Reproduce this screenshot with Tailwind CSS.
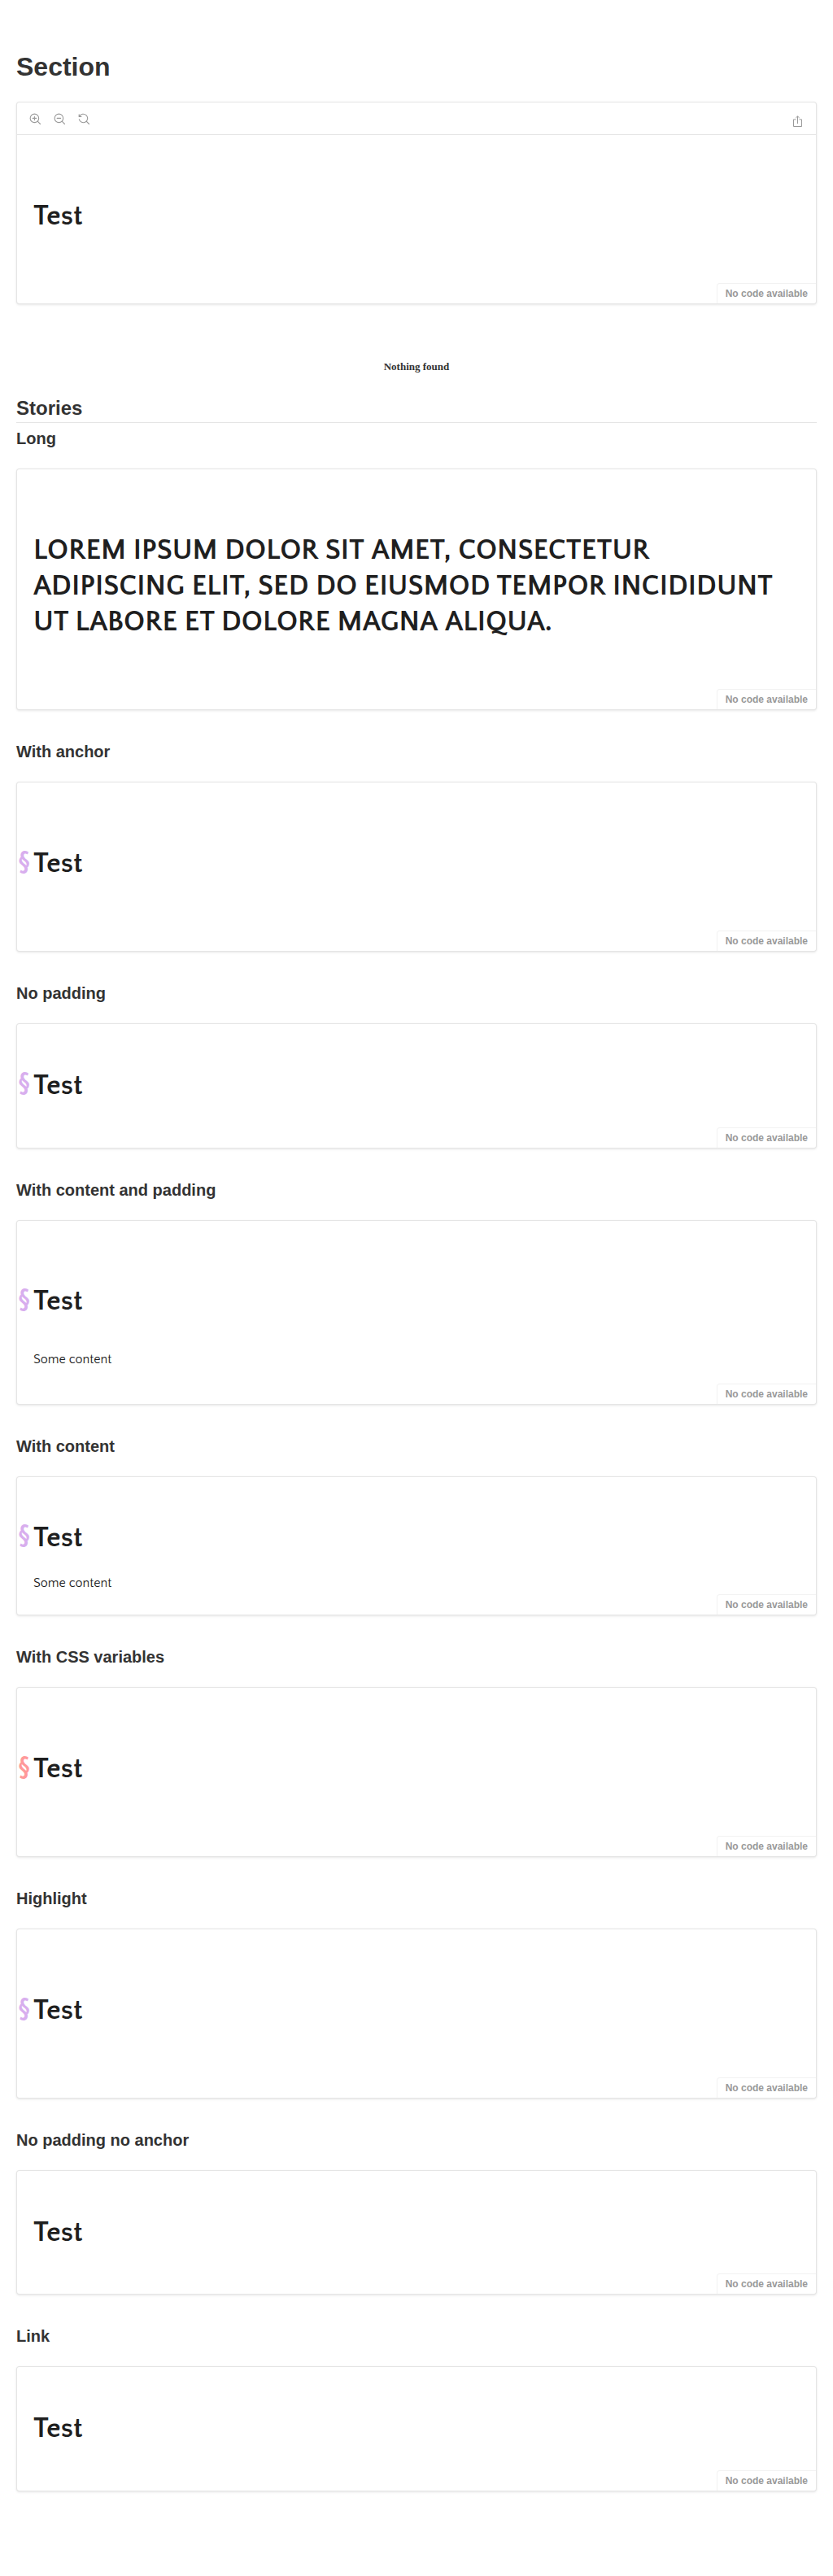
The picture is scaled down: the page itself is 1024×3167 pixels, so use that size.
<!DOCTYPE html>
<html lang="en">
<head>
<meta charset="utf-8">
<title>Section</title>
<script src="https://cdn.jsdelivr.net/npm/@tailwindcss/browser@4"></script>
</head>
<body class="bg-white">
<main class="h-[3167px] px-5 pt-[66px] font-['Liberation_Sans',Arial,sans-serif] text-[#333]">
  <h1 class="text-[32px] leading-8 font-bold">Section</h1>

  <section class="relative mt-[27px] h-[249px] rounded border border-black/10 bg-white shadow-[0_1px_3px_0_rgba(0,0,0,0.1)]">
    <div class="flex h-10 items-center justify-between border-b border-black/10 pl-[15px] pr-4 text-[#999]">
      <div class="mt-px flex gap-4">
        <svg class="size-3.5" viewBox="0 0 14 14" fill="none" stroke="currentColor" stroke-width="1.1" stroke-linecap="round"><circle cx="6.400" cy="6.400" r="5.250"/><path d="M10.200 10.200l3.300 3.300M4.200 6.400h4.400M6.400 4.200v4.400"/></svg>
        <svg class="size-3.5" viewBox="0 0 14 14" fill="none" stroke="currentColor" stroke-width="1.1" stroke-linecap="round"><circle cx="6.400" cy="6.400" r="5.250"/><path d="M10.200 10.200l3.300 3.300M4.200 6.400h4.400"/></svg>
        <svg class="size-3.5" viewBox="0 0 14 14" fill="none" stroke="currentColor" stroke-width="1.1" stroke-linecap="round"><path d="M1.700 4.100A5.250 5.250 0 1 1 1.300 7.700M10.200 10.200l3.300 3.300M1.200 1.700v2.700h2.700"/></svg>
      </div>
      <svg class="mt-[7px] h-3.5 w-[13px]" viewBox="0 0 13 14" fill="none" stroke="currentColor"><path d="M4.500 4.900h-3v8.600h10V4.900h-3M6.500 10V1"/><path d="M4.300 3L6.500.900 8.700 3"/></svg>
    </div>
    <h2 class="px-5 pt-[78px] font-['Quattrocento_Sans',Lato,sans-serif] text-[35.2px] leading-[44px] font-bold text-[#1f1f1f]">Test</h2>
    <div class="absolute right-0 bottom-0 rounded-tl rounded-br border-t border-l border-black/5 bg-white px-2.5 py-1 text-xs leading-4 font-bold text-[#999]">No code available</div>
  </section>

  <div class="mt-[67px] text-center font-['Liberation_Serif',serif] text-[13px] leading-5 font-bold">Nothing found</div>
  <h2 class="mt-[29px] border-b border-black/10 pb-[5px] text-2xl leading-6 font-bold">Stories</h2>

  <h3 class="mt-[9px] text-xl leading-5 font-bold">Long</h3>
  <section class="relative mt-[27px] h-[297px] rounded border border-black/10 bg-white shadow-[0_1px_3px_0_rgba(0,0,0,0.1)]">
    <h2 class="px-5 pt-[78px] font-['Quattrocento_Sans',Lato,sans-serif] text-[35.2px] leading-[44px] font-bold text-[#1f1f1f]">LOREM IPSUM DOLOR SIT <span class="ml-px">AMET,</span> CONSECTETUR ADIPISCING ELIT, SED DO EIUSMOD TEMPOR INCIDIDUNT UT LABORE ET DOLORE MAGNA <span class="ml-[1.5px]">ALIQUA.</span></h2>
    <div class="absolute right-0 bottom-0 rounded-tl rounded-br border-t border-l border-black/5 bg-white px-2.5 py-1 text-xs leading-4 font-bold text-[#999]">No code available</div>
  </section>

  <h3 class="mt-[41px] text-xl leading-5 font-bold">With anchor</h3>
  <section class="relative mt-[27px] h-[209px] rounded border border-black/10 bg-white shadow-[0_1px_3px_0_rgba(0,0,0,0.1)]">
    <h2 class="px-5 pt-[78px] font-['Quattrocento_Sans',Lato,sans-serif] text-[35.2px] leading-[44px] font-bold text-[#1f1f1f]"><span class="relative block"><a class="absolute -left-[19px] -top-px text-[#d8aeee]">§</a>Test</span></h2>
    <div class="absolute right-0 bottom-0 rounded-tl rounded-br border-t border-l border-black/5 bg-white px-2.5 py-1 text-xs leading-4 font-bold text-[#999]">No code available</div>
  </section>

  <h3 class="mt-[41px] text-xl leading-5 font-bold">No padding</h3>
  <section class="relative mt-[27px] h-[154px] rounded border border-black/10 bg-white shadow-[0_1px_3px_0_rgba(0,0,0,0.1)]">
    <h2 class="px-5 pt-[54px] font-['Quattrocento_Sans',Lato,sans-serif] text-[35.2px] leading-[44px] font-bold text-[#1f1f1f]"><span class="relative block"><a class="absolute -left-[19px] -top-0.5 text-[#d8aeee]">§</a>Test</span></h2>
    <div class="absolute right-0 bottom-0 rounded-tl rounded-br border-t border-l border-black/5 bg-white px-2.5 py-1 text-xs leading-4 font-bold text-[#999]">No code available</div>
  </section>

  <h3 class="mt-[41px] text-xl leading-5 font-bold">With content and padding</h3>
  <section class="relative mt-[27px] h-[227px] rounded border border-black/10 bg-white shadow-[0_1px_3px_0_rgba(0,0,0,0.1)]">
    <h2 class="px-5 pt-[77px] font-['Quattrocento_Sans',Lato,sans-serif] text-[35.2px] leading-[44px] font-bold text-[#1f1f1f]"><span class="relative block"><a class="absolute -left-[19px] -top-px text-[#d8aeee]">§</a>Test</span></h2>
    <p class="mt-[37px] px-5 font-['Quattrocento_Sans',Lato,sans-serif] text-base leading-6 text-[#1f1f1f]">Some content</p>
    <div class="absolute right-0 bottom-0 rounded-tl rounded-br border-t border-l border-black/5 bg-white px-2.5 py-1 text-xs leading-4 font-bold text-[#999]">No code available</div>
  </section>

  <h3 class="mt-[41px] text-xl leading-5 font-bold">With content</h3>
  <section class="relative mt-[27px] h-[171px] rounded border border-black/10 bg-white shadow-[0_1px_3px_0_rgba(0,0,0,0.1)]">
    <h2 class="px-5 pt-[53px] font-['Quattrocento_Sans',Lato,sans-serif] text-[35.2px] leading-[44px] font-bold text-[#1f1f1f]"><span class="relative block"><a class="absolute -left-[19px] -top-0.5 text-[#d8aeee]">§</a>Test</span></h2>
    <p class="mt-[21px] px-5 font-['Quattrocento_Sans',Lato,sans-serif] text-base leading-6 text-[#1f1f1f]">Some content</p>
    <div class="absolute right-0 bottom-0 rounded-tl rounded-br border-t border-l border-black/5 bg-white px-2.5 py-1 text-xs leading-4 font-bold text-[#999]">No code available</div>
  </section>

  <h3 class="mt-[41px] text-xl leading-5 font-bold">With CSS variables</h3>
  <section class="relative mt-[27px] h-[209px] rounded border border-black/10 bg-white shadow-[0_1px_3px_0_rgba(0,0,0,0.1)]">
    <h2 class="px-5 pt-[78px] font-['Quattrocento_Sans',Lato,sans-serif] text-[35.2px] leading-[44px] font-bold text-[#1f1f1f]"><span class="relative block"><a class="absolute -left-[19px] -top-px text-[#ff9999]">§</a>Test</span></h2>
    <div class="absolute right-0 bottom-0 rounded-tl rounded-br border-t border-l border-black/5 bg-white px-2.5 py-1 text-xs leading-4 font-bold text-[#999]">No code available</div>
  </section>

  <h3 class="mt-[41px] text-xl leading-5 font-bold">Highlight</h3>
  <section class="relative mt-[27px] h-[209px] rounded border border-black/10 bg-white shadow-[0_1px_3px_0_rgba(0,0,0,0.1)]">
    <h2 class="px-5 pt-[78px] font-['Quattrocento_Sans',Lato,sans-serif] text-[35.2px] leading-[44px] font-bold text-[#1f1f1f]"><span class="relative block"><a class="absolute -left-[19px] -top-px text-[#d8aeee]">§</a>Test</span></h2>
    <div class="absolute right-0 bottom-0 rounded-tl rounded-br border-t border-l border-black/5 bg-white px-2.5 py-1 text-xs leading-4 font-bold text-[#999]">No code available</div>
  </section>

  <h3 class="mt-[41px] text-xl leading-5 font-bold">No padding no anchor</h3>
  <section class="relative mt-[27px] h-[153px] rounded border border-black/10 bg-white shadow-[0_1px_3px_0_rgba(0,0,0,0.1)]">
    <h2 class="px-5 pt-[54px] font-['Quattrocento_Sans',Lato,sans-serif] text-[35.2px] leading-[44px] font-bold text-[#1f1f1f]">Test</h2>
    <div class="absolute right-0 bottom-0 rounded-tl rounded-br border-t border-l border-black/5 bg-white px-2.5 py-1 text-xs leading-4 font-bold text-[#999]">No code available</div>
  </section>

  <h3 class="mt-[41px] text-xl leading-5 font-bold">Link</h3>
  <section class="relative mt-[27px] h-[154px] rounded border border-black/10 bg-white shadow-[0_1px_3px_0_rgba(0,0,0,0.1)]">
    <h2 class="px-5 pt-[54px] font-['Quattrocento_Sans',Lato,sans-serif] text-[35.2px] leading-[44px] font-bold text-[#1f1f1f]">Test</h2>
    <div class="absolute right-0 bottom-0 rounded-tl rounded-br border-t border-l border-black/5 bg-white px-2.5 py-1 text-xs leading-4 font-bold text-[#999]">No code available</div>
  </section>
</main>
</body>
</html>
